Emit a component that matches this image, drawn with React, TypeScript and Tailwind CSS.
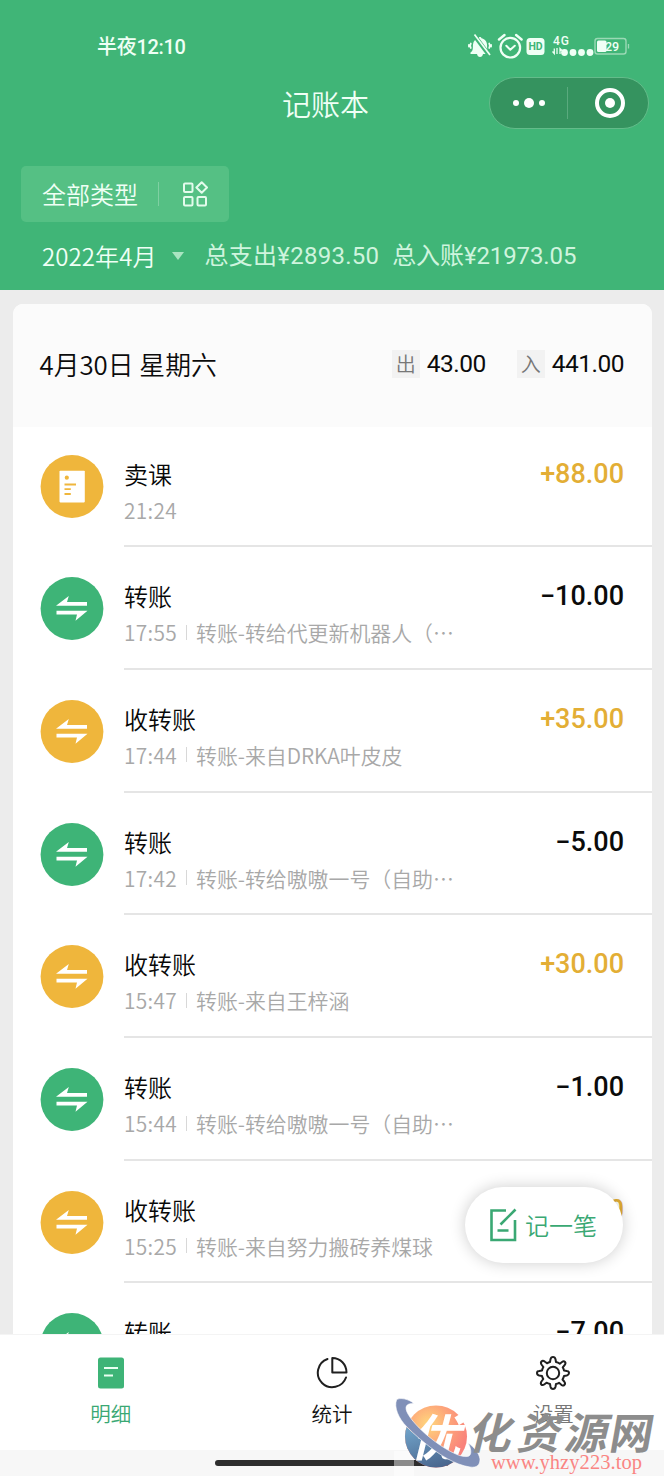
import React from 'react';

type Entry = {
  title: string;
  time: string;
  note?: string;
  amount: string;
  kind: 'order' | 'transfer';
};

const entries: Entry[] = [
  { title: '卖课', time: '21:24', amount: '+88.00', kind: 'order' },
  { title: '转账', time: '17:55', note: '转账-转给代更新机器人（…', amount: '−10.00', kind: 'transfer' },
  { title: '收转账', time: '17:44', note: '转账-来自DRKA叶皮皮', amount: '+35.00', kind: 'transfer' },
  { title: '转账', time: '17:42', note: '转账-转给嗷嗷一号（自助…', amount: '−5.00', kind: 'transfer' },
  { title: '收转账', time: '15:47', note: '转账-来自王梓涵', amount: '+30.00', kind: 'transfer' },
  { title: '转账', time: '15:44', note: '转账-转给嗷嗷一号（自助…', amount: '−1.00', kind: 'transfer' },
  { title: '收转账', time: '15:25', note: '转账-来自努力搬砖养煤球', amount: '+20.00', kind: 'transfer' },
  { title: '转账', time: '', amount: '−7.00', kind: 'transfer' },
];

function StatusIcons() {
  return (
    <svg width="164" height="28" viewBox="0 0 164 28" fill="none" stroke="#effff5" className="block">
      {/* muted bell */}
      <path d="M2.500 19.500c3-2 2.200-4.500 2.500-8 .3-3.500 2.800-5.700 5.500-6.200.3-1.800 2.700-1.800 3 0 2.700.5 5.200 2.700 5.500 6.200.3 3.500-.5 6 2.500 8v1.500H2.500z" fill="#effff5" stroke="none" />
      <path d="M9 21h6c-.4 2-1.400 3-3 3S9.400 23 9 21z" fill="#effff5" stroke="none" />
      <path d="M2.800 10.500Q1.600 12.800 2.800 15M21.200 10.500q1.200 2.300 0 4.500M.9 11.800v1.800M23.100 11.800v1.800" strokeWidth="1.700" strokeLinecap="round" />
      <path d="M6 2l15 20" stroke="#40b577" strokeWidth="4.400" />
      <path d="M6.500 1.500l15.500 20.500" strokeWidth="1.700" />
      {/* alarm */}
      <circle cx="42.300" cy="14.700" r="9.800" strokeWidth="2.200" />
      <path d="M38.300 12.700l4 4 4.500-4" strokeWidth="2" strokeLinecap="round" strokeLinejoin="round" />
      <path d="M31 6.500l5.500-4.500M53.600 6.500l-5.500-4.500" strokeWidth="2.400" strokeLinecap="round" />
      {/* HD */}
      <rect x="58.500" y="5" width="18" height="17" rx="3.500" fill="#effff5" stroke="none" />
      <text x="67.500" y="17.400" textAnchor="middle" fontSize="10.500" fontWeight="700" fontFamily="Roboto" fill="#40b577" stroke="none">HD</text>
      {/* signal */}
      <text x="85" y="12" fontSize="12" fontWeight="500" fontFamily="Roboto" fill="#effff5" stroke="none" textLength="16">4G</text>
      <path d="M84.500 18.500l1.800 2v-5M89 15v6M92 21v-5.500l2 2" strokeWidth="1.300" />
      <g fill="#effff5" stroke="none">
        <circle cx="96.500" cy="19.500" r="3.400" />
        <circle cx="105" cy="19.500" r="3.400" />
        <circle cx="113.500" cy="19.500" r="3.400" />
        <circle cx="122" cy="19.500" r="3.400" />
      </g>
      {/* battery */}
      <rect x="127" y="5.500" width="31" height="15.500" rx="2.500" stroke="#9ad9b5" strokeWidth="1.400" />
      <path d="M160.500 11v4.500" stroke="#9ad9b5" strokeWidth="1.300" />
      <rect x="129" y="7.500" width="9.500" height="11.500" rx="1.500" fill="#effff5" stroke="none" />
      <text x="137" y="17.800" fontSize="12.500" fontWeight="500" fontFamily="Roboto" fill="#effff5" stroke="none" textLength="14">29</text>
    </svg>
  );
}

function EntryIcon({ entry }: { entry: Entry }) {
  const income = entry.amount.startsWith('+');
  return (
    <svg width="64" height="64" viewBox="0 0 64 64" className="block shrink-0">
      <circle cx="32" cy="31.500" r="31.400" fill={income ? '#efb63c' : '#3eb477'} />
      {entry.kind === 'order' ? (
        <>
          <rect x="19.500" y="15.700" width="25.300" height="31.700" rx="0.800" fill="#fff" />
          <circle cx="26.800" cy="22.700" r="2.100" fill="#efb63c" />
          <path d="M24.500 29.500H36M24.500 34.200h6.300M24.500 39h6.300" stroke="#efb63c" strokeWidth="1.800" />
        </>
      ) : (
        <path d="M16 28.700L28.800 19 27 25H47V28.700zM16.500 33.800H47.500L35.500 43.800 37 37.500H16.500z" fill="#fff" />
      )}
    </svg>
  );
}

function EntryRow({ entry }: { entry: Entry }) {
  const income = entry.amount.startsWith('+');
  return (
    <li className="flex h-[122.700px] shrink-0 pl-[27.500px]">
      <div className="pt-[30px]">
        <EntryIcon entry={entry} />
      </div>
      <div className="ml-[20px] flex flex-1 justify-between border-b-2 border-[#e5e5e5] pr-[27.500px]">
        <div className="pt-[32px]">
          <div className="text-[24px] leading-[34px] text-[#080808]">{entry.title}</div>
          <div className="mt-[3px] flex items-center text-[20.900px] leading-[32px] text-[#a8a8a8]">
            <span className="tracking-[0.300px]">{entry.time}</span>
            {entry.note && (
              <>
                <span className="mx-[9px] h-[15px] w-px bg-[#d8d8d8]" />
                <span className="whitespace-nowrap">{entry.note}</span>
              </>
            )}
          </div>
        </div>
        <div
          className={`pt-[33px] font-[Roboto] text-[27px] leading-[32px] font-medium ${income ? 'text-[#e3ae35]' : 'text-[#0b0b0b]'}`}
        >
          {entry.amount}
        </div>
      </div>
    </li>
  );
}

function Header() {
  return (
    <header className="flex h-[290px] shrink-0 flex-col bg-[#40b577] text-[#effff5]">
      <div className="flex h-[77px] items-start justify-between pt-[33px] pr-[32px] pl-[97px]">
        <span className="font-[Roboto,'Noto_Sans_CJK_SC',sans-serif] text-[20px] leading-[28px] font-medium tracking-[-0.300px]">半夜12:10</span>
        <StatusIcons />
      </div>
      <div className="flex h-[52px] items-center justify-end pr-[15px]">
        <h1 className="mr-[120px] text-[29px] leading-[40px]">记账本</h1>
        <div className="flex h-[52px] w-[160px] items-center rounded-full border border-[#63bc8a] bg-[#35935f]">
          <div className="flex flex-1 items-center justify-center gap-[5px]">
            <i className="size-[6px] rounded-full bg-white" />
            <i className="size-[10px] rounded-full bg-white" />
            <i className="size-[6px] rounded-full bg-white" />
          </div>
          <div className="h-[32px] w-px bg-[#5aaa7e]" />
          <div className="flex flex-1 justify-center pl-[3px]">
            <div className="flex size-[30px] items-center justify-center rounded-full border-4 border-white">
              <i className="size-[10px] rounded-full bg-white" />
            </div>
          </div>
        </div>
      </div>
      <div className="mt-[37px] ml-[21px] flex h-[56px] w-[208px] items-center rounded-[5px] bg-[#55c084] pl-[21px]">
        <span className="text-[24px] leading-[34px]">全部类型</span>
        <span className="ml-[20px] h-[24px] w-px bg-[#7fd0a2]" />
        <svg width="27" height="27" viewBox="0 0 27 27" fill="none" stroke="#e4fbec" strokeWidth="2" className="ml-[23px] block">
          <rect x="2" y="2.500" width="8.500" height="8.500" rx="1" />
          <path d="M19.700 1.200l5.300 5.300-5.300 5.300-5.300-5.300z" strokeLinejoin="round" />
          <rect x="2" y="16" width="8.500" height="8.500" rx="1" />
          <rect x="15.500" y="16" width="8.500" height="8.500" rx="1" />
        </svg>
      </div>
      <div className="mt-[17px] flex items-center pl-[42px] text-[24px] leading-[34px]">
        <span className="tracking-[0.100px]">2022年4月</span>
        <i className="ml-[15px] border-x-[6.500px] border-t-[8px] border-x-transparent border-t-[#a9e5c1]" />
        <span className="ml-[21px] font-[Roboto,'Noto_Sans_CJK_SC',sans-serif] font-normal tracking-[0.250px] text-[#cff4de]">总支出¥2893.50</span>
        <span className="ml-[13px] font-[Roboto,'Noto_Sans_CJK_SC',sans-serif] font-normal tracking-[-0.100px] text-[#cff4de]">总入账¥21973.05</span>
      </div>
    </header>
  );
}

function DayTotal({ label, value }: { label: string; value: string }) {
  return (
    <div className="flex items-center">
      <span className="flex size-[28px] items-center justify-center bg-[#f2f2f2] text-[20px] leading-[28px] text-[#777]">{label}</span>
      <span className="ml-[7px] font-[Roboto] text-[24.500px] leading-[32px] font-normal tracking-[-0.500px]">{value}</span>
    </div>
  );
}

function TabBar() {
  return (
    <nav className="h-[116px] shrink-0 border-t border-[#f4f4f4] bg-white text-[20.500px] leading-[28px] text-[#111]">
      <div className="grid h-full grid-cols-3">
        <div className="flex flex-col items-center pt-[22px] text-[#3aa873]">
          <svg width="32" height="32" viewBox="0 0 32 32" className="block">
            <rect x="3" y="0.500" width="26" height="31" rx="2.500" fill="#3eb477" />
            <path d="M9 11h14M9 18.500h9" stroke="#eafff2" strokeWidth="2.200" />
          </svg>
          <span className="mt-[10px]">明细</span>
        </div>
        <div className="flex flex-col items-center pt-[22px]">
          <svg width="32" height="32" viewBox="0 0 32 32" fill="none" stroke="#202020" strokeWidth="2" strokeLinecap="round" strokeLinejoin="round" className="block">
            <path d="M11.500 2A14.500 14.500 0 1 0 30 20.500" />
            <path d="M16.300 1v14.500H30.500C30.500 7.500 24.500 1 16.300 1z" />
          </svg>
          <span className="mt-[10px]">统计</span>
        </div>
        <div className="flex flex-col items-center pt-[20px]">
          <svg width="36" height="36" viewBox="0 0 36 36" fill="none" stroke="#202020" strokeWidth="2" strokeLinejoin="round" className="block">
            <path d="M15.500 4.200Q16 2 18 2T20.500 4.200L21 7Q23 7.500 24.800 8.700L27 7Q28.800 5.600 30 7T29.300 10.500L27.700 12.300Q28.700 14 29 15.500L31.800 16Q34 16.300 34 18T31.800 20.500L29 21Q28.600 22.800 27.500 24.500L29.200 26.500Q30.800 28.500 29.300 30T25.800 29.300L24 27.800Q22.500 28.700 21 29L20.500 31.800Q20 34 18 34T15.500 31.800L15 29Q13 28.500 11.500 27.700L9.500 29.200Q7.500 30.800 6.300 29.500T6.800 26L8.300 24Q7.300 22.500 7 21L4.200 20.500Q2 20 2 18T4.200 16L7 15.500Q7.400 13.500 8.400 12L6.800 10Q5.200 8 6.500 6.500T10 6.800L12 8.300Q13.500 7.400 15 7z" />
            <circle cx="18" cy="18" r="6.200" />
          </svg>
          <span className="mt-[8px] text-[#777]">设置</span>
        </div>
      </div>
    </nav>
  );
}

function Watermark() {
  return (
    <div className="absolute right-0 bottom-0 h-[82px] w-[272px]">
      <svg width="272" height="82" viewBox="0 0 272 82" className="block">
        <defs>
          <radialGradient id="sun" cx="38%" cy="30%" r="65%">
            <stop offset="0" stopColor="#ffd87c" />
            <stop offset="0.550" stopColor="#fda37a" />
            <stop offset="1" stopColor="#f9827b" />
          </radialGradient>
          <linearGradient id="sea" x1="0" y1="0" x2="0.400" y2="1">
            <stop offset="0" stopColor="#78aed4" />
            <stop offset="1" stopColor="#456088" />
          </linearGradient>
          <clipPath id="globe">
            <circle cx="44" cy="42.500" r="31" />
          </clipPath>
        </defs>
        <rect x="2" y="57" width="20" height="25" fill="#fff" fillOpacity="0.450" />
        <circle cx="44" cy="42.500" r="31" fill="url(#sun)" />
        <path d="M10 28Q32 54 76 66V82H8z" fill="url(#sea)" clipPath="url(#globe)" />
        <text x="0" y="0" fontFamily="'Noto Sans CJK SC', sans-serif" fontWeight="700" fontSize="50" fill="#fff" transform="translate(18 62) skewX(-14)">优</text>
        <path
          d="M22 9.500C17 5 7 3 4.500 6C2 13 6 24 15 33C22 40 30 47 38 53C47 60 63 71 78 73C85 74 88 71 88 65C87 59 82 53 76 49C79 54 80 60 77 62C70 65 54 56 41 46C33 40 21 29 16 20C12 13 14 9 22 9.500z"
          fill="#8090b8"
          stroke="#fff"
          strokeWidth="0.600"
        />
        <g fontFamily="'Noto Sans CJK SC', sans-serif" fontWeight="700" fontSize="43" fill="#8d8d8d">
          <text transform="translate(75 55) skewX(-14)">化</text>
          <text transform="translate(124 55) skewX(-14)">资</text>
          <text transform="translate(171 55) skewX(-14)">源</text>
          <text transform="translate(216 55) skewX(-10)">网</text>
        </g>
        <text x="99" y="75" fontFamily="'Liberation Serif', serif" fontSize="20.500" fill="#fa8583" textLength="151">www.yhzy223.top</text>
      </svg>
    </div>
  );
}

export default function App() {
  return (
    <div
      lang="zh-CN"
      className="relative flex h-[1476px] w-[664px] flex-col overflow-hidden bg-[#ececec] font-['Noto_Sans_CJK_SC',sans-serif] font-[350]"
    >
      <Header />
      <main className="min-h-0 flex-1 overflow-hidden px-[12.500px] pt-[14px]">
        <section className="overflow-hidden rounded-t-[10px] bg-white">
          <div className="flex h-[123px] items-center justify-between bg-[#fbfbfb] pr-[27.500px] pb-[3px] pl-[27px] text-[#0b0b0b]">
            <span className="text-[25.800px] leading-[34px]">4月30日 星期六</span>
            <div className="flex gap-[31px]">
              <DayTotal label="出" value="43.00" />
              <DayTotal label="入" value="441.00" />
            </div>
          </div>
          <ul className="-mt-[2.400px] flex flex-col">
            {entries.map((entry, i) => (
              <EntryRow key={i} entry={entry} />
            ))}
          </ul>
        </section>
      </main>
      <TabBar />
      <div className="flex h-[26px] shrink-0 justify-center bg-[#f7f7f7] pt-[10px]">
        <div className="h-[6px] w-[234px] rounded-full bg-[#2d2d2d]" />
      </div>
      <button className="absolute top-[1187px] left-[465px] flex h-[76px] w-[158px] items-center rounded-full bg-white pl-[24px] text-[24px] text-[#3aa873] shadow-[0_0_16px_rgba(0,0,0,0.2)]">
        <svg width="28" height="34" viewBox="0 0 28 34" fill="none" stroke="#3aa873" strokeWidth="2.600" className="block">
          <path d="M17 2.500H2.500v29.500h23.500V12" />
          <path d="M26.500 1.500L11.500 16.500M8.500 22.500h11" />
        </svg>
        <span className="ml-[8px]">记一笔</span>
      </button>
      <Watermark />
    </div>
  );
}
